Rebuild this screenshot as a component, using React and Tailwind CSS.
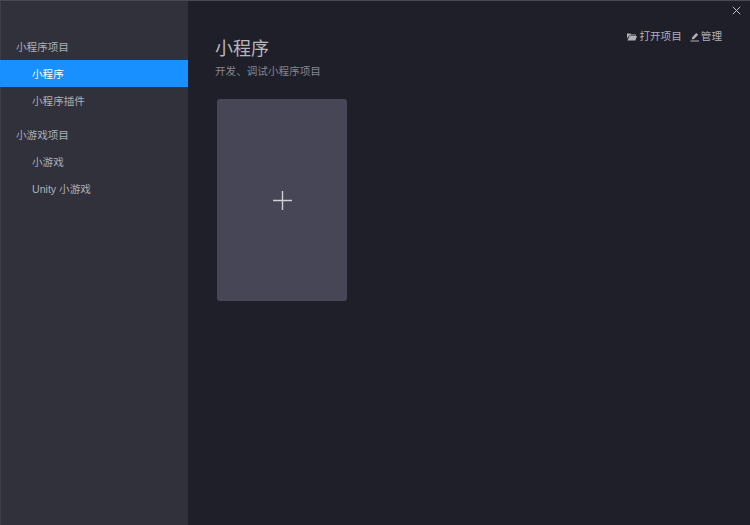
import React from "react";

function Row({ active, children }) {
  return (
    <div className={active
      ? "h-[27px] pl-[31px] pt-[2px] flex items-center bg-[#1890ff] text-white"
      : "h-[27px] pl-[31px] pt-[2px] flex items-center text-[#b0b0b6]"}>
      {children}
    </div>
  );
}

function Label({ children }) {
  return <div className="h-[27px] pl-[15px] pt-[2px] flex items-center text-[#b0b0b6]">{children}</div>;
}

export default function App() {
  return (
    <div className="w-[750px] h-[525px] overflow-hidden flex bg-[#1f1f2a] border-t border-[#4a4a55] text-[10.6px] font-['Liberation_Sans','Noto_Sans_CJK_SC',sans-serif]">
      <aside className="w-[187.6px] shrink-0 bg-[#31313c] pt-[32px] border-l border-[#3e3e49] relative">
        <Label>小程序项目</Label>
        <div className="-ml-px">
          <Row active><span className="ml-px">小程序</span></Row>
        </div>
        <Row>小程序插件</Row>
        <div className="mt-[7px]">
          <Label>小游戏项目</Label>
          <Row>小游戏</Row>
          <Row>Unity 小游戏</Row>
        </div>
      </aside>
      <main className="flex-1 relative pl-[27.4px] pt-[36px]">
        <button className="absolute top-[5px] right-[9px] text-[#c0c0c6]">
          <svg width="9" height="9" viewBox="0 0 9 9" fill="none" stroke="currentColor" strokeWidth="1">
            <path d="M0.8 0.8L8.2 8.2M8.2 0.8L0.8 8.2" />
          </svg>
        </button>
        <div className="flex items-start justify-between pr-[28px]">
          <div>
            <h1 className="text-[18px] leading-[24px] text-[#b8b8bc]">小程序</h1>
            <p className="mt-[3px] leading-[15px] text-[#85858d]">开发、调试小程序项目</p>
          </div>
          <div className="flex items-center gap-[8px] text-[#b0b0b6] mt-[-8px]">
            <span className="flex items-center gap-[2px]">
              <svg width="10" height="8" viewBox="0 0 10 8" fill="currentColor">
                <path d="M0 0.5h3.2l1 1H9v1H2.2L0 5.5zM2.5 3H10L8.4 7.5H0.4z" />
              </svg>
              打开项目
            </span>
            <span className="flex items-center gap-px">
              <svg width="10" height="10" viewBox="0 0 10 10" fill="currentColor">
                <path d="M6.2 1l2 1.8L4 7.1 1.8 7.6l.4-2.4zM0.5 8.4h8.5v1H0.5z" />
              </svg>
              管理
            </span>
          </div>
        </div>
        <div className="mt-[20px] ml-[2px] w-[130.5px] h-[202px] rounded-[3px] bg-[#464656] flex items-center justify-center text-[#cfcfd6]">
          <svg width="19" height="19" viewBox="0 0 19 19" fill="none" stroke="currentColor" strokeWidth="1.4">
            <path d="M9.5 0V19M0 9.5H19" />
          </svg>
        </div>
      </main>
    </div>
  );
}
